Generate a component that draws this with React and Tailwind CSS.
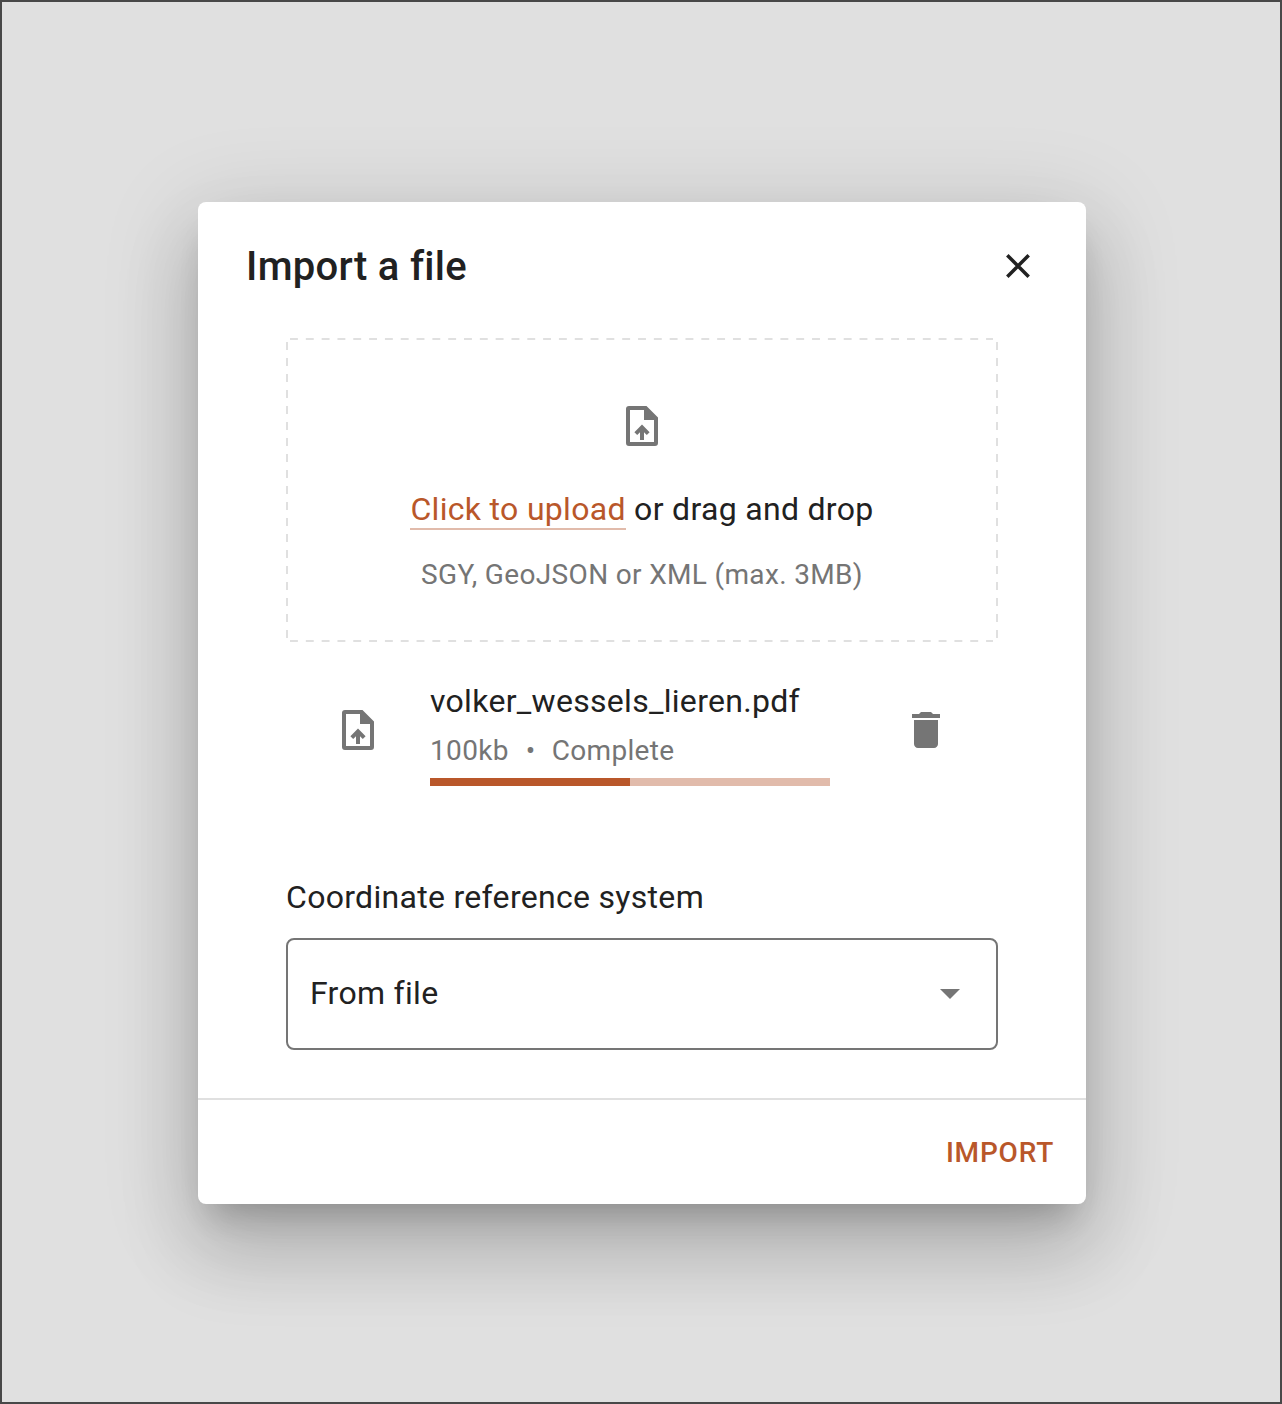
import React from "react";

function UploadIcon() {
  return (
    <svg width="48" height="48" viewBox="0 0 48 48" fill="#757575" aria-hidden="true">
      <path
        fillRule="evenodd"
        d="M11 4h17.5L40 15.5V41a3 3 0 0 1-3 3H11a3 3 0 0 1-3-3V7a3 3 0 0 1 3-3Zm1 4v32h24V18H26V8H12Z"
      />
      <path d="M22 38V30.2l-2.8 2.8-2.8-2.8L24 22.4l7.6 7.8-2.8 2.8-2.8-2.8V38h-4Z" />
    </svg>
  );
}

function DashedOutline() {
  return (
    <svg
      className="pointer-events-none absolute inset-0"
      width="712"
      height="304"
      viewBox="0 0 712 304"
      fill="none"
      stroke="#e0e0e0"
      strokeWidth="2"
      aria-hidden="true"
    >
      <path d="M4 1H707M4 303H707" strokeDasharray="7.9 7.92" />
      <path d="M1 4V300M711 4V300" strokeDasharray="7.9 8.1" />
    </svg>
  );
}

function Dropzone() {
  return (
    <div className="relative flex h-[304px] flex-col items-center pt-16">
      <DashedOutline />
      <UploadIcon />
      <p className="mt-[31px] text-[32px] leading-[56px] tracking-[0.31px]">
        <a className="inline-block h-[49px] border-b-2 border-[#e1bbab] leading-[56px] text-[#b9572a]">Click to upload</a> or drag and
        drop
      </p>
      <p className="mt-[18px] text-[28px] leading-10 tracking-[0.34px] text-[#757575]">SGY, GeoJSON or XML (max. 3MB)</p>
    </div>
  );
}

function FileRow() {
  return (
    <div className="mt-8 flex h-28 items-center px-12">
      <UploadIcon />
      <div className="ml-12 w-[400px]">
        <p className="-mt-0.5 text-[32px] leading-[56px] tracking-[0.3px]">volker_wessels_lieren.pdf</p>
        <p className="mt-0.5 flex h-10 text-[28px] leading-10 tracking-[0.34px] text-[#757575]">
          <span>100kb</span>
          <span className="mr-4 ml-[17px]">•</span>
          <span>Complete</span>
        </p>
        <div className="mt-[7px] h-2 bg-[#e1bbab]">
          <div className="h-2 w-1/2 bg-[#b9572a]" />
        </div>
      </div>
      <svg className="ml-[72px]" width="48" height="48" viewBox="0 0 24 24" fill="#757575" aria-hidden="true">
        <path d="M6 19c0 1.1.9 2 2 2h8c1.1 0 2-.9 2-2V7H6v12zM19 4h-3.5l-1-1h-5l-1 1H5v2h14V4z" />
      </svg>
    </div>
  );
}

export default function App() {
  return (
    <div className="flex h-[1404px] w-[1282px] items-start justify-center overflow-hidden border-2 border-[#484848] bg-[#e0e0e0] pt-[200px] pl-[2px] font-['Roboto',sans-serif] text-[#212121]">
      <div className="flex h-[1002px] w-[888px] flex-col rounded-lg bg-white shadow-[0_22px_30px_-14px_rgba(0,0,0,0.2),0_48px_76px_6px_rgba(0,0,0,0.14),0_18px_92px_12px_rgba(0,0,0,0.12)]">
        <header className="flex h-32 items-center justify-between pr-11 pl-12">
          <h1 className="pt-0.5 text-[40px] leading-[64px] font-medium tracking-[0.3px]">Import a file</h1>
          <button aria-label="Close">
            <svg width="48" height="48" viewBox="0 0 48 48" stroke="#212121" strokeWidth="3.5" aria-hidden="true">
              <path d="m13.3 13.3 21.4 21.4M34.7 13.3 13.3 34.7" />
            </svg>
          </button>
        </header>
        <main className="mt-2 px-[88px]">
          <Dropzone />
          <FileRow />
          <label className="mt-[83px] block text-[32px] leading-[56px] tracking-[0.3px]">Coordinate reference system</label>
          <button className="mt-[13px] flex h-28 w-full items-center justify-between rounded-lg border-2 border-[#757575] px-[22px] pb-0.5 text-[32px] tracking-[0.3px]">
            <span>From file</span>
            <svg width="48" height="48" viewBox="0 0 24 24" fill="#757575" aria-hidden="true">
              <path d="m7 10 5 5 5-5z" />
            </svg>
          </button>
        </main>
        <footer className="mt-12 flex flex-1 items-center justify-end border-t-2 border-[#e0e0e0] pt-0.5 pr-8">
          <button className="text-[28px] font-medium tracking-[0.8px] text-[#b9572a]">IMPORT</button>
        </footer>
      </div>
    </div>
  );
}
